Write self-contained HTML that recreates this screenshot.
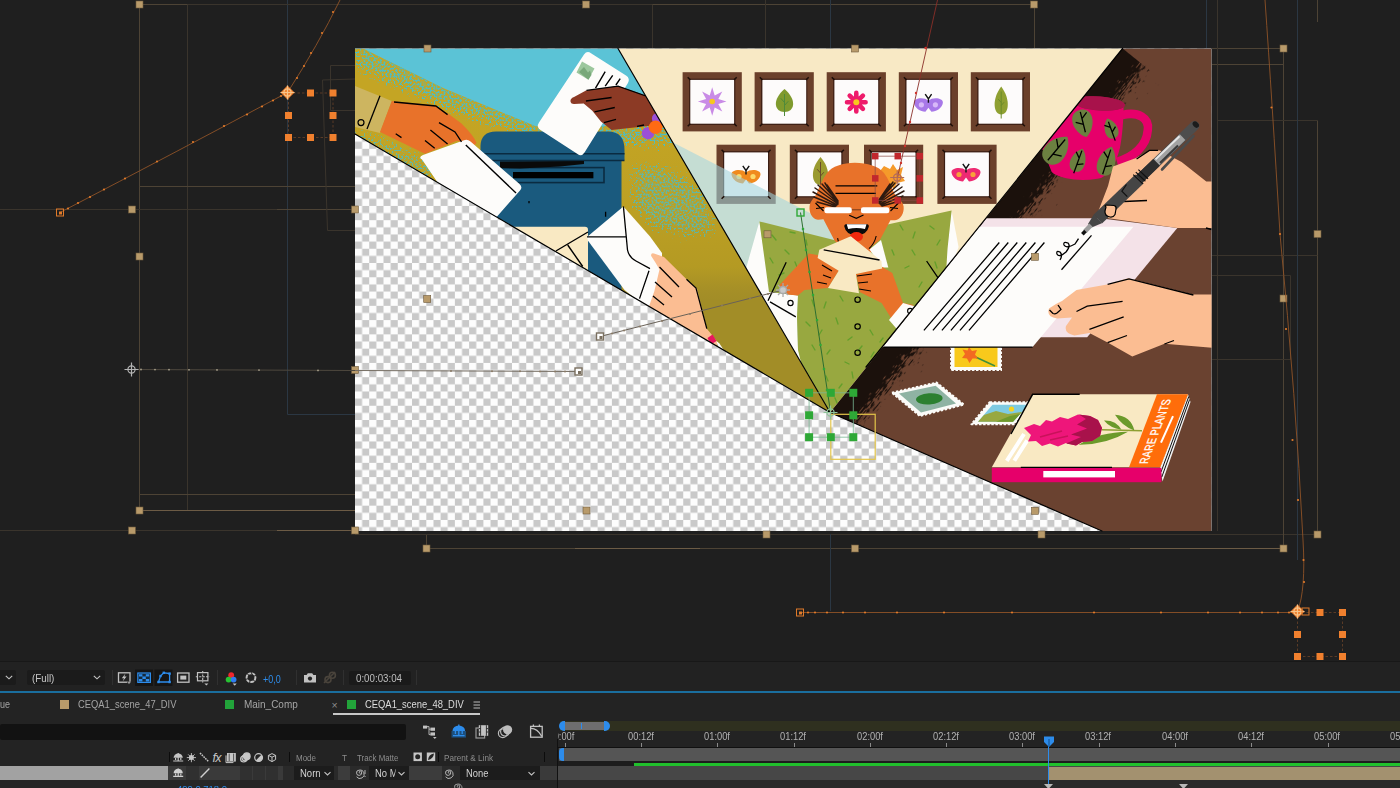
<!DOCTYPE html>
<html lang="en">
<head>
<meta charset="utf-8">
<title>After Effects – CEQA1_scene_48_DIV</title>
<style>
html,body{margin:0;padding:0;}
body{width:1400px;height:788px;overflow:hidden;position:relative;background:#1f1f1f;font-family:"Liberation Sans",sans-serif;color:#b4b4b4;}
#viewer{position:absolute;left:0;top:0;width:1400px;height:662px;display:block;}
#vbar{position:absolute;left:0;top:661px;width:1400px;height:31px;background:#222222;border-top:1px solid #181818;box-sizing:border-box;}
#blueline{position:absolute;left:0;top:691px;width:1400px;height:2px;background:#1a6e9e;}
#tabs{position:absolute;left:0;top:693px;width:1400px;height:24px;background:#232323;}
#tl{position:absolute;left:0;top:717px;width:1400px;height:71px;background:#232323;}
.abs{position:absolute;}
.t{transform-origin:0 50%;position:absolute;white-space:nowrap;font-size:11px;line-height:12px;color:#b0b0b0;}
.sw{position:absolute;width:9px;height:9px;}
.dd{position:absolute;background:#1b1b1b;border-radius:2px;}
</style>
</head>
<body>
<!--VIEWER-->
<svg id="viewer" viewBox="0 0 1400 662" width="1400" height="662">
<defs>
<pattern id="chk" x="354.95" y="48.9" width="14.274" height="14.274" patternUnits="userSpaceOnUse">
<rect width="14.274" height="14.274" fill="#fdfdfd"/><rect x="7.137" width="7.137" height="7.137" fill="#c9c9c9"/><rect y="7.137" width="7.137" height="7.137" fill="#c9c9c9"/>
</pattern>
<clipPath id="comp"><rect x="355" y="48.5" width="856.5" height="482.5"/></clipPath>
</defs>
<rect width="1400" height="662" fill="#1f1f1f"/>
<g id="guides">
<path d="M139.5,4.5 H1034 M139.5,4.5 V510.5 M1034.5,4.5 V48" stroke="#4d4335" stroke-width="1" fill="none" opacity="1"/>
<path d="M280,4.5 H340 M500,4.5 H586" stroke="#6c5b45" stroke-width="1" fill="none" opacity="1"/>
<path d="M187.5,4.5 V510.5" stroke="#3a342c" stroke-width="1" fill="none" opacity="1"/>
<path d="M287.5,0 V414.5 H355" stroke="#2b3743" stroke-width="1" fill="none" opacity="1"/>
<path d="M652.5,4.5 V48 M187.5,4.5 H652 M765.5,0 V48" stroke="#3a342c" stroke-width="1" fill="none" opacity="1"/>
<path d="M0,209.5 H355" stroke="#3a342c" stroke-width="1" fill="none" opacity="1"/>
<path d="M277,209.5 H355" stroke="#4d4335" stroke-width="1" fill="none" opacity="1"/>
<path d="M139.5,186.5 H355" stroke="#4d4335" stroke-width="1" fill="none" opacity="1"/>
<path d="M139.5,494.5 H355" stroke="#4d4335" stroke-width="1" fill="none" opacity="1"/>
<path d="M139.5,510.5 H355" stroke="#6c5b45" stroke-width="1" fill="none" opacity="1"/>
<path d="M0,530.5 H355" stroke="#3a342c" stroke-width="1" fill="none" opacity="1"/>
<path d="M277,530.5 H355" stroke="#6c5b45" stroke-width="1" fill="none" opacity="1"/>
<path d="M426.5,534 V548.5 M426.5,548.5 H1283.5" stroke="#4d4335" stroke-width="1" fill="none" opacity="1"/>
<path d="M575,548.5 H700 M1130,548.5 H1283" stroke="#6c5b45" stroke-width="1" fill="none" opacity="1"/>
<path d="M355,534.5 H1317.5" stroke="#3a342c" stroke-width="1" fill="none" opacity="1"/>
<path d="M1283.5,48.5 V548.5" stroke="#4d4335" stroke-width="1" fill="none" opacity="1"/>
<path d="M1317.5,120.5 V534.5" stroke="#4d4335" stroke-width="1" fill="none" opacity="1"/>
<path d="M1212,48.5 H1283.5 M1212,64.5 H1283.5" stroke="#4d4335" stroke-width="1" fill="none" opacity="1"/>
<path d="M1217.5,0 V531" stroke="#3a342c" stroke-width="1" fill="none" opacity="1"/>
<path d="M1217,120.5 H1317.5 M1212,255.5 H1317.5 M1212,275.5 H1290.5 V359.5 H1212" stroke="#3a342c" stroke-width="1" fill="none" opacity="1"/>
<path d="M830.5,534 V611 M830.5,0 V48" stroke="#2b3743" stroke-width="1" fill="none" opacity="1"/>
<path d="M330.5,65.5 H355 M330.5,65.5 V110.5 H355 M322.5,80 L327.5,230.5 H355 M322.5,80 L355,79" stroke="#3a342c" stroke-width="1" fill="none" opacity="1"/>
<path d="M1297.5,0 V560 M1206.5,0 V48" stroke="#2b3743" stroke-width="1" fill="none"/>
<path d="M1317.5,0 V22" stroke="#4d4335" stroke-width="1" fill="none"/>
</g>
<rect x="355" y="48.5" width="856.5" height="482.5" fill="url(#chk)"/>
<g clip-path="url(#comp)">
<defs>
<clipPath id="p1"><polygon points="355,48.5 618,48.5 830.1,412.5 355,134"/></clipPath>
<clipPath id="p2"><polygon points="618,48.5 1122.6,48.5 830.1,412.5"/></clipPath>
<clipPath id="p3"><polygon points="1122.6,48.5 1211.5,48.5 1211.5,531 1102,531 830.1,412.5"/></clipPath>
<linearGradient id="gold" gradientUnits="userSpaceOnUse" x1="0" y1="115" x2="0" y2="300">
<stop offset="0" stop-color="#c4a524"/><stop offset="0.5" stop-color="#bda023"/><stop offset="0.82" stop-color="#b49a23"/><stop offset="0.95" stop-color="#a58f27"/><stop offset="1" stop-color="#a28d27"/>
</linearGradient>
<filter id="speck" x="-10%" y="-10%" width="120%" height="120%" color-interpolation-filters="sRGB">
<feGaussianBlur in="SourceAlpha" stdDeviation="7" result="b"/>
<feTurbulence type="fractalNoise" baseFrequency="0.5" numOctaves="2" seed="7" result="n"/>
<feColorMatrix in="n" type="matrix" values="0 0 0 0 0  0 0 0 0 0  0 0 0 0 0  1 0 0 0 0" result="m"/>
<feComposite in="b" in2="m" operator="arithmetic" k1="0" k2="0.5" k3="1" k4="-0.96" result="t"/>
<feComponentTransfer in="t" result="t2"><feFuncA type="linear" slope="9" intercept="0"/></feComponentTransfer>
<feFlood flood-color="#4fbcc0"/>
<feComposite in2="t2" operator="in"/>
</filter>
<clipPath id="gclip"><path d="M355,48.5 L363,48.5 L443,88 L535,126 Q560,129.5 590,126.5 L650,124 L700,122.5 L850,130 L850,420 L355,420Z"/></clipPath>
<linearGradient id="bandgrad" gradientUnits="userSpaceOnUse" x1="0" y1="0" x2="0" y2="40">
<stop offset="0" stop-color="#000" stop-opacity="1"/><stop offset="0.3" stop-color="#000" stop-opacity="0.8"/><stop offset="0.62" stop-color="#000" stop-opacity="0.42"/><stop offset="1" stop-color="#000" stop-opacity="0"/>
</linearGradient>
<filter id="charcoal" x="-2%" y="-10%" width="104%" height="130%" color-interpolation-filters="sRGB">
<feTurbulence type="fractalNoise" baseFrequency="0.14 0.8" numOctaves="2" seed="11" result="n"/>
<feColorMatrix in="n" type="matrix" values="0 0 0 0 0  0 0 0 0 0  0 0 0 0 0  1 0 0 0 0" result="m"/>
<feComposite in="SourceAlpha" in2="m" operator="arithmetic" k1="0" k2="1" k3="1" k4="-0.78" result="t"/>
<feComponentTransfer in="t" result="t2"><feFuncA type="linear" slope="7" intercept="0"/></feComponentTransfer>
<feFlood flood-color="#1b110c"/>
<feComposite in2="t2" operator="in"/>
</filter>
<filter id="rough" x="-5%" y="-5%" width="110%" height="110%">
<feTurbulence type="fractalNoise" baseFrequency="0.5" numOctaves="2" seed="3" result="n"/>
<feDisplacementMap in="SourceGraphic" in2="n" scale="7" xChannelSelector="R" yChannelSelector="G"/>
</filter>
</defs>
<!-- PANEL 1 : mailbox -->
<g clip-path="url(#p1)">
<rect x="355" y="48" width="480" height="370" fill="#5bc3d6"/>
<path id="ground" d="M355,48.5 L363,48.5 L443,88 L535,126 Q560,129.5 590,126.5 L650,124 L700,122.5 L850,130 L850,420 L355,420Z" fill="url(#gold)"/>
<g clip-path="url(#gclip)">
<path d="M350,30 L450,78 L540,116 L640,120 L710,120 L706,150 L640,150 L540,146 L440,112 L350,72Z" fill="#000" filter="url(#speck)"/>
<path d="M628,160 L665,160 L712,190 L722,238 L690,242 L650,232 L626,205Z" fill="#000" filter="url(#speck)" opacity="0.8"/>
<path d="M350,124 L380,132 L425,154 L452,170 L450,196 L400,170 L350,140Z" fill="#000" filter="url(#speck)" opacity="0.85"/>
</g>
<!-- mailbox -->
<path d="M480.5,160 L480.5,146 Q481,131.5 496,131.5 L608,131.5 Q624.5,131.5 624.5,150 L624.5,160 L621.5,160 L621.5,300 L440,300 L440,160Z" fill="#1a5a7e"/>
<path d="M480.5,153.7 H624.5 M480.5,160.5 H624.5" stroke="#0a2b41" stroke-width="1.6" fill="none"/>
<rect x="500" y="167.6" width="104" height="15" fill="none" stroke="#0a2b41" stroke-width="1.6"/>
<path d="M500,161.5 L584,161 L584,164 L560,166.5 L520,168.5 L500,168Z" fill="#0a0a0a"/>
<rect x="513" y="172" width="80.4" height="6.3" fill="#000"/>
<path d="M529,201 V203.3 M605.6,211.8 V216.7" stroke="#000" stroke-width="1.3"/>
<!-- cream envelope at bottom -->
<path d="M500,226.8 L585,226.8 Q588,226.8 588,230 L588,272 L520,240Z" fill="#f9e9c3"/>
<path d="M555.9,251 L588,232 M567.7,245 L582.7,266.5" stroke="#000" stroke-width="1.4" fill="none"/>
<!-- white envelope 2 + peach hand -->
<path d="M587,236.9 L623.4,206.4 L650,236.5 L662,253 L662,290 L652,312 L624.5,290 L588,240.7Z" fill="#fdfcfa"/>
<path d="M587,236.9 H625.6 M623.4,206.4 L627.5,250 Q628.8,257 636,261 L650,268.6 M649,270.8 L639.5,298.6" stroke="#000" stroke-width="1.3" fill="none"/>
<path d="M651.2,256 Q650.5,252.6 654,253.4 L664,257 L686.5,279.3 L697,288.5 L706.8,328.7 L712,335 L718,343 L716,346 L649,306.5 L654.4,291 L659.5,269.6 L655.4,262.5Z" fill="#fbbd92"/>
<path d="M716.5,341 L719.5,343.5 L724,350.5 L718,347Z" fill="#fdfcfa"/>
<path d="M707.5,338 L712.5,334.5 L716.5,341 L711,344.5Z" fill="#e8175d"/>
<path d="M659.5,267 L679,287 M686.5,279.3 L696,288 L706.8,328.7 M655,282 L672,297 M653,296 L664,305" stroke="#000" stroke-width="1.3" fill="none"/>
<!-- postcard & brown hand -->
<path d="M591,53.2 L626,75.6 Q630.6,78.6 627.8,83.3 L584.5,152.5 Q581.5,157 577.5,154 L540.5,130 Q536,127 539,122.5 L584,54.5 Q587,50.5 591,53.2Z" fill="#fdfcfa"/>
<path d="M582,61.4 L594.5,68.6 L588.4,79.7 L576.5,72.5Z" fill="#9cc79d"/>
<path d="M579,72 L584,67 L588,72.5 L590,70.5 L591.5,75 L588.4,79.7Z" fill="#6fa070" opacity="0.8"/>
<path d="M605.2,71.7 L595.5,88.2 M612.7,75.4 L605.2,86.1 M620.2,78.6 L615.9,85" stroke="#000" stroke-width="1.4"/>
<path d="M570.5,101.5 Q570,98.5 574,97 L586,90.4 L618,86.1 L665,102 L665,126 L650,125.8 L611.6,130 L600.9,121.5 L592.3,110.8 L583.7,103.6 L574,104Q571,104 570.5,101.5Z" fill="#8c3a25"/>
<path d="M586.5,90.4 L618,86.1 L660,101 M585.9,101 L611.6,97.5 M594.5,111.8 L614.8,107.5 M604,122.6 L616,119.3 M637,126.4 L644,125" stroke="#000" stroke-width="1.3" fill="none"/>
<circle cx="657.5" cy="118.5" r="5.6" fill="#9b4fd6"/><circle cx="648" cy="133.2" r="6.2" fill="#9b4fd6"/><circle cx="655.6" cy="127.2" r="6.8" fill="#ff6a13"/>
<!-- envelope 1 + orange hand -->
<path d="M355,86 L391.8,101 L380,133 L355,127Z" fill="#cdb560"/>
<path d="M380,95.8 L367,129" stroke="#000" stroke-width="1.3"/>
<circle cx="361" cy="122.6" r="3" fill="none" stroke="#000" stroke-width="1.2"/>
<path d="M391.8,101 L435.8,105.4 L448.6,114 L461.5,123.6 Q474,136 476.5,143 Q474,147 468,144 L457,140.8 L425,153.7 L380,132Z" fill="#e8722a"/>
<path d="M422,159.5 Q418,157 423,155 L464,140.2 Q467.5,139 470.5,141.5 L519.5,184 Q523,187 520,190.5 L494,220 L440,186Z" fill="#fdfcfa"/>
<path d="M465.8,145 L516,193" stroke="#000" stroke-width="1.4"/>
<path d="M394,102 L435.8,106 L447.6,114.6 M439,122.6 L455,132 L461.5,141.9 M430.4,130 L447.6,144 M425,140.4 L434.7,148.3 M395.7,133.7 L401.5,137.6" stroke="#000" stroke-width="1.3" fill="none"/>
</g>

<!-- PANEL 2 : man -->
<g clip-path="url(#p2)">
<rect x="610" y="48" width="520" height="370" fill="#f8e9c5"/>
<rect x="682.6" y="72.2" width="59.2" height="59.2" fill="#6b402b"/><rect x="689.1" y="78.7" width="46.2" height="46.2" fill="#3b1d13"/><rect x="690.3" y="79.9" width="43.8" height="43.8" fill="#fdfbfb"/>
<rect x="754.6" y="72.2" width="59.2" height="59.2" fill="#6b402b"/><rect x="761.1" y="78.7" width="46.2" height="46.2" fill="#3b1d13"/><rect x="762.4" y="79.9" width="43.8" height="43.8" fill="#fdfbfb"/>
<rect x="826.7" y="72.2" width="59.2" height="59.2" fill="#6b402b"/><rect x="833.2" y="78.7" width="46.2" height="46.2" fill="#3b1d13"/><rect x="834.4" y="79.9" width="43.8" height="43.8" fill="#fdfbfb"/>
<rect x="898.8" y="72.2" width="59.2" height="59.2" fill="#6b402b"/><rect x="905.2" y="78.7" width="46.2" height="46.2" fill="#3b1d13"/><rect x="906.5" y="79.9" width="43.8" height="43.8" fill="#fdfbfb"/>
<rect x="970.8" y="72.2" width="59.2" height="59.2" fill="#6b402b"/><rect x="977.3" y="78.7" width="46.2" height="46.2" fill="#3b1d13"/><rect x="978.5" y="79.9" width="43.8" height="43.8" fill="#fdfbfb"/>
<rect x="716.5" y="144.7" width="59.2" height="59.2" fill="#6b402b"/><rect x="723.0" y="151.2" width="46.2" height="46.2" fill="#3b1d13"/><rect x="724.2" y="152.4" width="43.8" height="43.8" fill="#fdfbfb"/>
<rect x="789.8" y="144.7" width="59.2" height="59.2" fill="#6b402b"/><rect x="796.3" y="151.2" width="46.2" height="46.2" fill="#3b1d13"/><rect x="797.5" y="152.4" width="43.8" height="43.8" fill="#fdfbfb"/>
<rect x="864.0" y="144.7" width="59.2" height="59.2" fill="#6b402b"/><rect x="870.5" y="151.2" width="46.2" height="46.2" fill="#3b1d13"/><rect x="871.7" y="152.4" width="43.8" height="43.8" fill="#fdfbfb"/>
<rect x="937.4" y="144.7" width="59.2" height="59.2" fill="#6b402b"/><rect x="943.9" y="151.2" width="46.2" height="46.2" fill="#3b1d13"/><rect x="945.1" y="152.4" width="43.8" height="43.8" fill="#fdfbfb"/>
<polygon points="712.2,87.2 714.7,95.4 722.3,91.4 718.3,99.0 726.5,101.5 718.3,104.0 722.3,111.6 714.7,107.6 712.2,115.8 709.7,107.6 702.1,111.6 706.1,104.0 697.9,101.5 706.1,99.0 702.1,91.4 709.7,95.4" fill="#c98be6"/><circle cx="712.2" cy="101.5" r="2.8" fill="#f7c81e"/>
<path d="M784.5,89.0 C797.25,99.8 794.7,112.0 784.5,112.0 C774.3,112.0 771.75,99.8 784.5,89.0Z" fill="#7f9a2e"/><path d="M784.5,94.0 V116.0 M784.5,102.5 l-3.74,-4.25 M784.5,105.5 l3.74,-4.25" stroke="#4f8a3a" stroke-width="1" fill="none"/>
<path d="M1001.2,86.5 C1010.95,99.3 1009.0,114.5 1001.2,114.5 C993.4000000000001,114.5 991.45,99.3 1001.2,86.5Z" fill="#8fa032"/><path d="M1001.2,91.5 V118.5 M1001.2,102.5 l-2.86,-3.25 M1001.2,105.5 l2.86,-3.25" stroke="#6b8a2a" stroke-width="1" fill="none"/>
<path d="M820.5,157.0 C831.75,169.8 829.5,185.0 820.5,185.0 C811.5,185.0 809.25,169.8 820.5,157.0Z" fill="#9a9a30"/><path d="M820.5,162.0 V189.0 M820.5,173 l-3.3,-3.75 M820.5,176 l3.3,-3.75" stroke="#6b4a2a" stroke-width="1" fill="none"/>
<path d="M856.3,102.2 L865.6,102.2 M856.3,102.2 L862.9,108.8 M856.3,102.2 L856.3,111.5 M856.3,102.2 L849.7,108.8 M856.3,102.2 L847.0,102.2 M856.3,102.2 L849.7,95.6 M856.3,102.2 L856.3,92.9 M856.3,102.2 L862.9,95.6 " stroke="#ee1b6b" stroke-width="4.6" stroke-linecap="round" fill="none"/><circle cx="856.3" cy="102.2" r="3" fill="#f7c81e"/>
<path d="M928.4,100.8 C932.4,96.8 943.4,97.8 942.9,102.8 C942.4,107.8 936.4,111.8 931.4,111.8 L928.4,107.8 L925.4,111.8 C920.4,111.8 914.4,107.8 913.9,102.8 C913.4,97.8 924.4,96.8 928.4,100.8Z" fill="#a878e8"/><circle cx="921.4" cy="104.8" r="2.6" fill="#d8b8f8"/><circle cx="935.4" cy="104.8" r="2.6" fill="#d8b8f8"/><path d="M928.4,102.8 V98.8 l-3.2,-4.6 M928.4,98.8 l3.2,-4.6" stroke="#111" stroke-width="1.4" fill="none"/>
<path d="M746,172.5 C750,168.5 761,169.5 760.5,174.5 C760,179.5 754,183.5 749,183.5 L746,179.5 L743,183.5 C738,183.5 732,179.5 731.5,174.5 C731,169.5 742,168.5 746,172.5Z" fill="#f08a1e"/><circle cx="739" cy="176.5" r="2.6" fill="#fbd86a"/><circle cx="753" cy="176.5" r="2.6" fill="#fbd86a"/><path d="M746.0,174.5 V170.5 l-3.2,-4.6 M746.0,170.5 l3.2,-4.6" stroke="#111" stroke-width="1.4" fill="none"/>
<path d="M966,170.5 C970,166.5 981,167.5 980.5,172.5 C980,177.5 974,181.5 969,181.5 L966,177.5 L963,181.5 C958,181.5 952,177.5 951.5,172.5 C951,167.5 962,166.5 966,170.5Z" fill="#ee2a72"/><circle cx="959" cy="174.5" r="2.6" fill="#f8a03a"/><circle cx="973" cy="174.5" r="2.6" fill="#f8a03a"/><path d="M966.0,172.5 V168.5 l-3.2,-4.6 M966.0,168.5 l3.2,-4.6" stroke="#111" stroke-width="1.4" fill="none"/>
<path d="M884,166 l6,3 l3,-5 l4,6 l6,-3 l-2,8 l4,6 l-8,2 l-3,6 l-5,-5 l-8,1 l4,-7 l-5,-7z" fill="#f59a2a"/>
<polygon points="671,139.5 672.6,142.2 850,233.7 800,350 760,300" fill="rgb(160,212,221)" fill-opacity="0.58"/>
</g>
<g clip-path="url(#p2)"><path d="M690.3,79.9 l-2.6,-2.6 M734.1,79.9 l2.6,-2.6 M690.3,123.7 l-2.6,2.6 M734.1,123.7 l2.6,2.6 M762.4,79.9 l-2.6,-2.6 M806.1,79.9 l2.6,-2.6 M762.4,123.7 l-2.6,2.6 M806.1,123.7 l2.6,2.6 M834.4,79.9 l-2.6,-2.6 M878.2,79.9 l2.6,-2.6 M834.4,123.7 l-2.6,2.6 M878.2,123.7 l2.6,2.6 M906.5,79.9 l-2.6,-2.6 M950.2,79.9 l2.6,-2.6 M906.5,123.7 l-2.6,2.6 M950.2,123.7 l2.6,2.6 M978.5,79.9 l-2.6,-2.6 M1022.3,79.9 l2.6,-2.6 M978.5,123.7 l-2.6,2.6 M1022.3,123.7 l2.6,2.6 M724.2,152.4 l-2.6,-2.6 M768.0,152.4 l2.6,-2.6 M724.2,196.2 l-2.6,2.6 M768.0,196.2 l2.6,2.6 M797.5,152.4 l-2.6,-2.6 M841.3,152.4 l2.6,-2.6 M797.5,196.2 l-2.6,2.6 M841.3,196.2 l2.6,2.6 M871.7,152.4 l-2.6,-2.6 M915.5,152.4 l2.6,-2.6 M871.7,196.2 l-2.6,2.6 M915.5,196.2 l2.6,2.6 M945.1,152.4 l-2.6,-2.6 M988.9,152.4 l2.6,-2.6 M945.1,196.2 l-2.6,2.6 M988.9,196.2 l2.6,2.6 " stroke="#1e0e08" stroke-width="1.5" fill="none"/></g>
<!-- MAN -->
<g clip-path="url(#p2)">
<!-- white lapel/shirt left -->
<polygon points="759.4,221.4 745,272 815,395 812,380 798,350 797,317 798,295.4 770,290" fill="#fdfcfa"/>
<!-- green coat -->
<polygon points="951.6,210.5 958.6,247 953,262 946.3,268 947,250" fill="#fdfcfa"/>
<polygon points="759.4,221.4 838,241 878,240 876,227 951.6,210.5 947.6,248 946.3,268 962,268 962,420 815,420 798,350 797,317 798,295.4 769,292" fill="#98a840"/>
<g stroke="#639f2b" stroke-width="1.35" fill="none" stroke-linecap="round">
<path d="M772,235 l4,5 M790,232 l5,1 M806,240 l1,5 M785,250 l4,4 M770,258 l3,5 M779,275 l5,-2 M795,262 l2,5 M812,300 l2,6 M826,302 l-2,6 M840,296 l3,5 M806,322 l4,4 M822,330 l-3,5 M836,318 l2,6 M848,340 l4,-3 M870,330 l3,5 M812,345 l3,5 M830,350 l-3,4 M845,362 l4,2 M862,346 l-4,5 M874,352 l-3,5 M826,376 l2,5 M842,384 l-3,4 M852,372 l1,6 M835,398 l2,5 M880,342 l3,-4 M900,225 l3,5 M915,232 l-2,6 M930,226 l4,3 M912,250 l3,5 M905,268 l4,-2 M922,282 l-3,5 M935,262 l2,6 M928,300 l4,-3 M940,240 l-3,5 M892,250 l2,5"/>
</g>
<path d="M786.2,262.2 L768,300.8 M926.6,261 L938.4,278.3" stroke="#000" stroke-width="1.3"/>
<path d="M770,301.9 L795.8,316.9" stroke="#000" stroke-width="1.3"/>
<circle cx="790.5" cy="303" r="2.6" fill="none" stroke="#000" stroke-width="1.2"/>
<g fill="none" stroke="#000" stroke-width="1.2"><circle cx="857.6" cy="299.7" r="2.7"/><circle cx="857.6" cy="326.5" r="2.7"/><circle cx="857.6" cy="352.7" r="2.7"/></g>
<!-- neck + head -->
<rect x="843" y="232" width="28" height="26" fill="#e8722a"/>
<path d="M854.9,162.8 C843,162.8 832,166.5 827,173 C822.5,179 819.5,187 816.8,193.3 C814.5,198.5 810.5,200 809.6,206 C808.8,212.5 812,219 818,219.8 L823.4,219.3 L834.5,240.6 L845,252 L869,248.7 L880.2,239.6 L890.4,220.3 L895,220.3 C901,219.5 904.3,213 903.6,206.5 C902.8,200.5 897,198.5 894.2,193.3 C891.5,187 888.5,179 884,173 C879,166.5 867,162.8 854.9,162.8Z" fill="#e8722a"/>
<polygon points="881,240 869.5,249.5 882,267.6 888.3,267.6" fill="#fdfcfa"/>
<path d="M835.5,185.8 H877.3 M835.5,193.3 H876" stroke="#000" stroke-width="1.2"/>
<g stroke="#2e1a10" stroke-width="1.5" fill="none" stroke-linecap="round">
<path d="M838,204 L815,188 M838,203 L818,185 M838,202 L822,184 M837,205 L813,192 M836,206 L814,197 M838,201 L827,185 M835,207 L817,202 M837,203 L825,183"/>
<path d="M879,203 L902,187 M879,202 L899,184 M879,201 L895,183 M880,204 L904,191 M881,205 L903,196 M879,200 L890,184 M882,206 L900,201 M879,202 L893,182"/>
</g>
<rect x="824.4" y="207.3" width="27.4" height="5.9" rx="2.2" fill="#fff"/><rect x="860.9" y="207.3" width="28.4" height="5.9" rx="2.2" fill="#fff"/>
<path d="M851.8,209.8 H860.9" stroke="#5a2a14" stroke-width="0.8"/>
<path d="M815.5,203 l8,8 M816,208.5 l8,-1 M898.5,203 l-8,8 M898,208.5 l-8,-1 M849.2,215.2 L856.3,218.3 L863.5,215 M837.6,238.2 l0.8,3.4 M876.2,236 Q874.5,243.5 869,248.7" stroke="#000" stroke-width="1.1" fill="none"/>
<path d="M844.3,226.5 Q844,223.8 847.5,224 L865.5,224 Q869.2,223.8 868.8,226.8 Q867,235.2 856.5,235.2 Q846,235.2 844.3,226.5Z" fill="#0a0a0a"/>
<path d="M846.7,224.2 H866.5 L865,229 Q856.5,226.8 848.2,229Z" fill="#fff"/>
<ellipse cx="856.4" cy="236.8" rx="6.6" ry="4.8" fill="#f0280e"/>
<!-- hands + envelope -->
<polygon points="778.7,285.8 808.7,253.6 821.6,255.8 838.7,270.8 828,287.9 804.4,290 798,295.4 787.2,294.4" fill="#e8722a"/>
<polygon points="855.9,274 881.6,266.5 892.3,272.9 903,302.9 913.8,305 892.3,320 881.6,303 860.2,292.2" fill="#e8722a"/>
<polygon points="903,303 918,307.2 896.6,328.7 889,320" fill="#fdfcfa"/>
<circle cx="910.1" cy="310.9" r="2.5" fill="none" stroke="#000" stroke-width="1.1"/>
<polygon points="850.8,236.3 881.4,261 882.2,268.6 855.9,274 859,293.3 828,287.9 838.7,270.8 817.6,258 819.3,249.7" fill="#f9e9c3"/>
<path d="M823.7,249.8 L879.5,260" stroke="#000" stroke-width="1.3"/>
<path d="M822,265 l10,6 M823,275 l8,3 M817,282 l10,2 M857,276 l15,-2 M858,283 l10,-1 M859,289 l12,2" stroke="#000" stroke-width="1.2"/>
</g>

<!-- PANEL 3 : desk -->
<g clip-path="url(#p3)">
<rect x="820" y="48" width="400" height="490" fill="#6a4230"/>
<g transform="translate(830.1,412.5) rotate(-51.2)">
<polygon points="0,0 467,0 467,42 300,40 90,38 10,36 -6,10" fill="url(#bandgrad)" filter="url(#charcoal)"/>
</g>
<!-- stamps -->
<g>
<polygon points="891.9,392.7 936.6,382.6 964,404.6 919.8,416" fill="#fbfbf8" stroke="#fbfbf8" stroke-width="2" stroke-dasharray="2.5 1.6" stroke-linejoin="round"/>
<polygon points="899,393.6 935.6,385.8 956,403.6 921,412.4" fill="#8fb3a3"/>
<ellipse cx="929.3" cy="398.9" rx="13.3" ry="5.6" fill="#2c8030" transform="rotate(-4 929.3 398.9)"/>
<rect x="951" y="340" width="50" height="30" fill="#fbfbf8" stroke="#fbfbf8" stroke-width="2" stroke-dasharray="2.5 1.6"/>
<rect x="954.5" y="343" width="43" height="24" fill="#f8c91c"/>
<path d="M969,354 L995,366" stroke="#3f8f3a" stroke-width="1.5"/>
<path d="M969,347 l3,4 l5,-1 l-2,4.5 l3,4 l-5.5,0 l-3,4.5 l-2.5,-4.5 l-5,-0.5 l3,-4 l-2.5,-4.5 l5,1z" fill="#f26a21"/>
<polygon points="989.7,402.2 1034,402.2 1014,424.3 971.4,424.3" fill="#fbfbf8" stroke="#fbfbf8" stroke-width="2" stroke-dasharray="2.5 1.6" stroke-linejoin="round"/>
<polygon points="992.5,404.7 1029,404.7 1013,421.8 978,421.8" fill="#7fcbe2"/>
<polygon points="984,415 996,411 1008,414 1022,412 1013,421.8 978,421.8" fill="#98a840"/>
<polygon points="996,421.8 1010,416 1020,414 1013,421.8" fill="#6f9a2c"/>
<circle cx="1011.5" cy="409" r="2.6" fill="#f7d21e"/>
</g>
<!-- mug -->
<path d="M1122,115.2 C1138,111 1149.5,118 1147.8,130 C1146.5,146 1134,157 1117,161.8" fill="none" stroke="#e6006a" stroke-width="8.6"/>
<path d="M1060,98 L1123.5,104 C1123.8,120 1122,138 1119.9,148 Q1117,160 1112,168 Q1106,177.5 1097.5,178.8 Q1080,181.5 1066.2,178.2 Q1056,176 1051.7,172 L1043.2,150.5 L1030,132Z" fill="#e6006a"/>
<ellipse cx="1099.4" cy="103.5" rx="25.6" ry="7" fill="#a8124b" transform="rotate(4 1099.4 103.5)"/>
<g transform="translate(1083.2,123.5) rotate(166)"><path d="M0,-14.0 C12.65,-6.3 14.26,14.0 0,14.0 C-14.26,14.0 -12.65,-6.3 0,-14.0Z" fill="#6b8040"/><path d="M0,12 L0,-9 M0,5 l-6,5 M0,-1 l7,4" stroke="#000" stroke-width="1.3" fill="none"/></g>
<ellipse cx="1099.4" cy="103.5" rx="25.6" ry="7" fill="#a8124b" transform="rotate(4 1099.4 103.5)"/>
<g transform="translate(1110.8,128.4) rotate(-20)"><path d="M0,-10.5 C8.25,-4.7250000000000005 9.3,10.5 0,10.5 C-9.3,10.5 -8.25,-4.7250000000000005 0,-10.5Z" fill="#6b8040"/><path d="M0,-7 L0,13 M0,-1 l-5,-4 M0,4 l5,-4" stroke="#000" stroke-width="1.3" fill="none"/></g>
<g transform="translate(1056.8,149.5) rotate(40)"><path d="M0,-16.5 C13.750000000000002,-7.425 15.5,16.5 0,16.5 C-15.5,16.5 -13.750000000000002,-7.425 0,-16.5Z" fill="#6b8040"/><path d="M0,-13 L0,14 M0,-2 l-7,-6 M0,6 l8,-4" stroke="#000" stroke-width="1.3" fill="none"/></g>
<g transform="translate(1078.5,160) rotate(20)"><path d="M0,-12.0 C9.350000000000001,-5.4 10.54,12.0 0,12.0 C-10.54,12.0 -9.350000000000001,-5.4 0,-12.0Z" fill="#6b8040"/><path d="M0,-10 L0,14 M0,-2 l-5,-5 M0,5 l6,-3" stroke="#000" stroke-width="1.3" fill="none"/></g>
<g transform="translate(1107,161) rotate(18)"><path d="M0,-15.0 C11.0,-6.75 12.4,15.0 0,15.0 C-12.4,15.0 -11.0,-6.75 0,-15.0Z" fill="#6b8040"/><path d="M0,-12 L0,14 M0,-3 l-6,-5 M0,6 l6,-3" stroke="#000" stroke-width="1.3" fill="none"/></g>
</g>

</g>

<g clip-path="url(#p3)">
<!-- paper -->
<polygon points="986.2,218.2 1100,218.2 1177.3,227.9 1087.2,337.2 1040,337.2 900,337" fill="#f4e2e8"/>
<polygon points="979.3,226.8 1133.4,226.8 1032.6,346.9 882.8,346.9" fill="#fdfcfa"/>
<path d="M884,347.2 H1032.6" stroke="#000" stroke-width="1.3"/>
<g stroke="#000" stroke-width="1.3">
<path d="M999.3,242.5 L923.9,330.4 M1008.3,242.5 L932.9,330.4 M1017.3,242.5 L941.9,330.4 M1026.3,242.5 L950.9,330.4 M1035.4,242.5 L960,330.4 M1044.4,242.5 L969,330.4"/>
<path d="M1061.5,269.7 L1091.5,235.4"/>
</g>
<path d="M1078.5,238.6 Q1077,241 1075,244 Q1066,249 1064,245 Q1063,241 1068,243 Q1071,246 1066,252 Q1059,258 1057,254 Q1056,250 1060,252 Q1063,255 1060,260" fill="none" stroke="#000" stroke-width="1.3"/>
<!-- upper hand with pen -->
<path d="M1098,212 L1108,186 L1113,166.5 L1136,158 L1149.4,150.5 L1160,150.5 L1181.6,162 L1206.3,181.5 L1215,181.5 L1215,227.9 L1177.3,227.9 L1108.7,218.2Z" fill="#fbbd92"/>
<path d="M1136.6,159 L1149.4,150.4 L1158,150.4 M1124,201.5 L1147,200.5 M1206,228 L1211.5,229.5" stroke="#000" stroke-width="1.3" fill="none"/>
<!-- pen -->
<g>
<path d="M1193.5,136 L1162,169.5" stroke="#4b4b4b" stroke-width="2.6" stroke-linecap="round"/>
<path d="M1194.6,125.8 L1140,178.4" stroke="#4d4d4d" stroke-width="9.6" stroke-linecap="round"/>
<ellipse cx="1195.8" cy="124.6" rx="3.6" ry="2.6" transform="rotate(44 1195.8 124.6)" fill="#1c1c1c"/>
<path d="M1182.6,137.2 L1156.5,162.4" stroke="#a2a2a2" stroke-width="8"/>
<path d="M1179.5,136.2 L1155.5,159.4" stroke="#e6e6e6" stroke-width="2"/>
<path d="M1178,145.5 L1160,163" stroke="#3a3a3a" stroke-width="2.2"/>
<path d="M1156.5,162.4 L1138,180.3" stroke="#2e2e2e" stroke-width="9.6"/>
<path d="M1139.5,178.9 L1098,218.8" stroke="#454545" stroke-width="12.2"/>
<path d="M1102.4,223 L1093.8,214.4 L1088,224 L1091.6,227.6Z" fill="#454545"/>
<path d="M1091,225.2 L1085,231.4" stroke="#9c9c9c" stroke-width="4.6"/>
<path d="M1085.4,231 L1082.4,234.2" stroke="#111" stroke-width="3.6"/>
<path d="M1133.2,174.6 l9.6,9.2 M1135.8,172.1 l9.6,9.2 M1138.4,169.6 l9.6,9.2" stroke="#111" stroke-width="1.2"/>
<path d="M1126.5,184.5 l-4.6,6.6 l5.4,5.6" stroke="#111" stroke-width="1.2" fill="none"/>
</g>
<path d="M1106,207 Q1104,205 1106.5,205 L1114,205.5 Q1116.5,206 1116,209 L1115,214.5 Q1113.5,217.5 1110,217 Q1104.5,216 1105,211Z" fill="#fbbd92" stroke="#000" stroke-width="1.2"/>
<!-- lower hand -->
<path d="M1049,308.5 Q1055,304 1062,301 L1076.5,290 L1107,284.5 L1128,278.3 L1193.4,294.4 L1215,294.4 L1215,348 L1164.5,343.7 L1132.3,356.5 L1107.6,342.6 L1089.4,333 L1074.4,335.5 Q1064,333 1066,326 L1072,317.5 L1057,318.5 Q1046,317 1049,308.5Z" fill="#fbbd92"/>
<g stroke="#000" stroke-width="1.3" fill="none">
<path d="M1107.6,284.3 L1129,278.9 L1193.4,295 M1076.5,311.5 L1087.2,306.2 L1122.6,301.4 M1089.4,329.3 L1123.7,316.9 M1107.6,342.6 L1127,335.5 M1164.5,344 L1174,340.5"/>
<path d="M1049.5,310 L1053,313.5 Q1055,314.5 1057,313 L1061,309.5 L1058,305"/>
</g>
<!-- book -->
<polygon points="1188,394.3 1190.5,402 1162.5,481.5 1160.2,467.2" fill="#f2f2f2"/>
<path d="M1188.8,396.5 L1161,472 M1189.6,399.5 L1161.8,477" stroke="#111" stroke-width="1"/>
<polygon points="1032.6,394.3 1188,394.3 1160.2,467.2 991.8,467.2" fill="#f9e9c3"/>
<polygon points="1157,394.3 1188,394.3 1160.2,467.2 1129,467.2" fill="#ff6d0a"/>
<rect x="991.8" y="467.8" width="169.6" height="14.4" fill="#e6006a"/>
<rect x="1043.3" y="471" width="71.7" height="6.4" fill="#fff"/>
<path d="M1079.7,394.3 L1032.6,394.3 L1011,434 M1020.8,467.4 L1112,467.4" stroke="#000" stroke-width="1.4" fill="none"/>
<path d="M1006.8,460.8 L1024,434 M1014.3,460.8 L1027.2,440.4" stroke="#fff" stroke-width="4"/>
<path d="M1161,442.6 L1173,416.2" stroke="#fff" stroke-width="2"/>
<text transform="matrix(0.345,-0.938,0.97,0,1147.5,464)" font-family="'Liberation Sans',sans-serif" font-size="12.6" fill="#fff" stroke="#fff" stroke-width="0.3" textLength="69" lengthAdjust="spacingAndGlyphs">RARE PLANTS</text>
<!-- flower -->
<path d="M1102,429.7 L1142,430.8" stroke="#8fa032" stroke-width="1.4"/>
<path d="M1115,414.7 Q1131,416 1134.4,430.5 Q1122,426 1115,414.7Z M1104,420.5 Q1116,420 1121.5,429.8 Q1110,428 1104,420.5Z M1078.7,444.7 Q1100,432 1128,431.8 Q1106,445 1078.7,444.7Z" fill="#6b9a2a"/>
<path d="M1024,428 L1034,424 L1040,426 L1046,420 L1052,421.5 L1060,417 L1068,419 L1078,414.5 L1090,416 L1098,420 L1102,428 L1100,436 L1092,441 L1082,442 L1076,445.5 L1066,443 L1058,446.5 L1050,443.5 L1042,446 L1036,441 L1028,441.5 L1031,435Z" fill="#ee167a"/>
<path d="M1079,414.5 L1090,416 L1098,420 L1102,428 L1100,436 L1092,441 L1082,442 L1076,445.5 L1066,443.5 L1081,437 L1071,434.5 L1087,428.5 L1077,424.5 L1086,419Z" fill="#a8124b"/><path d="M1040,437 L1062,431 M1050,440 L1068,436" stroke="#c8125a" stroke-width="1.4"/>
</g>
<!-- panel edges -->
<g stroke="#000" stroke-width="1.2" fill="none" stroke-linecap="round">
<path d="M618,48.5 L830.1,412.5 M355,134 L830.1,412.5 L1102,531 M1122.6,48.5 L866,367"/>
</g>

<!--ART5-->
</g>
<g id="overlays">
<g stroke="#6e5a3c" stroke-width="0.6">
<rect x="136.0" y="1.0" width="7" height="7" fill="#b89a6a"/>
<rect x="582.5" y="1.0" width="7" height="7" fill="#b89a6a"/>
<rect x="1030.5" y="1.0" width="7" height="7" fill="#b89a6a"/>
<rect x="424.0" y="45.0" width="7" height="7" fill="#b89a6a"/>
<rect x="851.5" y="45.0" width="7" height="7" fill="#b89a6a"/>
<rect x="1280.0" y="45.0" width="7" height="7" fill="#b89a6a"/>
<rect x="128.5" y="206.0" width="7" height="7" fill="#b89a6a"/>
<rect x="351.5" y="206.0" width="7" height="7" fill="#b89a6a"/>
<rect x="136.0" y="253.0" width="7" height="7" fill="#b89a6a"/>
<rect x="423.7" y="295.5" width="7" height="7" fill="#b89a6a"/>
<rect x="351.5" y="366.5" width="7" height="7" fill="#b89a6a"/>
<rect x="136.0" y="507.0" width="7" height="7" fill="#b89a6a"/>
<rect x="128.5" y="527.0" width="7" height="7" fill="#b89a6a"/>
<rect x="351.5" y="527.0" width="7" height="7" fill="#b89a6a"/>
<rect x="583.0" y="507.0" width="7" height="7" fill="#b89a6a"/>
<rect x="423.0" y="545.0" width="7" height="7" fill="#b89a6a"/>
<rect x="851.5" y="545.0" width="7" height="7" fill="#b89a6a"/>
<rect x="1280.0" y="545.0" width="7" height="7" fill="#b89a6a"/>
<rect x="763.0" y="531.0" width="7" height="7" fill="#b89a6a"/>
<rect x="1038.0" y="531.0" width="7" height="7" fill="#b89a6a"/>
<rect x="1314.0" y="531.0" width="7" height="7" fill="#b89a6a"/>
<rect x="1314.0" y="230.5" width="7" height="7" fill="#b89a6a"/>
<rect x="1280.0" y="295.0" width="7" height="7" fill="#b89a6a"/>
<rect x="1031.5" y="253.3" width="7" height="7" fill="#b89a6a"/>
<rect x="1031.5" y="507.3" width="7" height="7" fill="#b89a6a"/>
<rect x="764.0" y="230.8" width="7" height="7" fill="#b89a6a"/>
</g>
<path d="M60,212.5 Q180,150 287.5,92.5 Q318,45 340,0" stroke="#8f5227" stroke-width="0.9" fill="none"/>
<circle cx="68.0" cy="208.5" r="1.1" fill="#e07a2a"/>
<circle cx="78.0" cy="203.0" r="1.1" fill="#e07a2a"/>
<circle cx="90.0" cy="197.0" r="1.1" fill="#e07a2a"/>
<circle cx="104.0" cy="189.5" r="1.1" fill="#e07a2a"/>
<circle cx="125.0" cy="178.5" r="1.1" fill="#e07a2a"/>
<circle cx="157.0" cy="161.5" r="1.1" fill="#e07a2a"/>
<circle cx="193.0" cy="142.0" r="1.1" fill="#e07a2a"/>
<circle cx="224.0" cy="126.0" r="1.1" fill="#e07a2a"/>
<circle cx="247.0" cy="114.5" r="1.1" fill="#e07a2a"/>
<circle cx="262.0" cy="106.5" r="1.1" fill="#e07a2a"/>
<circle cx="273.0" cy="100.5" r="1.1" fill="#e07a2a"/>
<circle cx="281.0" cy="96.0" r="1.1" fill="#e07a2a"/>
<circle cx="297.0" cy="78.0" r="1.1" fill="#e07a2a"/>
<circle cx="304.0" cy="66.0" r="1.1" fill="#e07a2a"/>
<circle cx="311.0" cy="53.0" r="1.1" fill="#e07a2a"/>
<circle cx="322.0" cy="33.0" r="1.1" fill="#e07a2a"/>
<circle cx="333.0" cy="12.0" r="1.1" fill="#e07a2a"/>
<rect x="56.5" y="209" width="7" height="7" fill="none" stroke="#e07a2a" stroke-width="1"/><rect x="59" y="211.5" width="3" height="3" fill="#e07a2a"/>
<path d="M288.5,93 H333 V137.5 H288.5Z" stroke="#6a4228" stroke-width="0.8" fill="none" stroke-dasharray="2.5 2"/>
<rect x="285.0" y="112.0" width="7" height="7" fill="#f0802e"/>
<rect x="285.0" y="134.0" width="7" height="7" fill="#f0802e"/>
<rect x="307.0" y="89.5" width="7" height="7" fill="#f0802e"/>
<rect x="307.0" y="134.0" width="7" height="7" fill="#f0802e"/>
<rect x="329.5" y="89.5" width="7" height="7" fill="#f0802e"/>
<rect x="329.5" y="112.0" width="7" height="7" fill="#f0802e"/>
<rect x="329.5" y="134.0" width="7" height="7" fill="#f0802e"/>
<polygon points="287.5,85.5 294.5,92.5 287.5,99.5 280.5,92.5" fill="#f0802e"/>
<g stroke="#f6c48a" fill="none" stroke-width="1.2"><circle cx="287.5" cy="92.5" r="3.6"/><path d="M280.5,92.5 H294.5 M287.5,85.5 V99.5"/></g>
<path d="M800,612.5 H1297.5 M1297.5,611.5 Q1306,590 1303,540 Q1296,400 1280,234 Q1272,100 1265,0" stroke="#8f5227" stroke-width="0.9" fill="none"/>
<circle cx="808.0" cy="612.5" r="1.1" fill="#e07a2a"/>
<circle cx="815.0" cy="612.5" r="1.1" fill="#e07a2a"/>
<circle cx="827.0" cy="612.5" r="1.1" fill="#e07a2a"/>
<circle cx="843.0" cy="612.5" r="1.1" fill="#e07a2a"/>
<circle cx="865.0" cy="612.5" r="1.1" fill="#e07a2a"/>
<circle cx="897.0" cy="612.5" r="1.1" fill="#e07a2a"/>
<circle cx="944.0" cy="612.5" r="1.1" fill="#e07a2a"/>
<circle cx="1012.0" cy="612.5" r="1.1" fill="#e07a2a"/>
<circle cx="1094.0" cy="612.5" r="1.1" fill="#e07a2a"/>
<circle cx="1161.0" cy="612.5" r="1.1" fill="#e07a2a"/>
<circle cx="1208.0" cy="612.5" r="1.1" fill="#e07a2a"/>
<circle cx="1240.0" cy="612.5" r="1.1" fill="#e07a2a"/>
<circle cx="1262.0" cy="612.5" r="1.1" fill="#e07a2a"/>
<circle cx="1278.0" cy="612.5" r="1.1" fill="#e07a2a"/>
<circle cx="1289.0" cy="612.5" r="1.1" fill="#e07a2a"/>
<circle cx="1304.0" cy="582.0" r="1.1" fill="#e07a2a"/>
<circle cx="1303.5" cy="560.0" r="1.1" fill="#e07a2a"/>
<circle cx="1298.0" cy="500.0" r="1.1" fill="#e07a2a"/>
<circle cx="1292.5" cy="440.0" r="1.1" fill="#e07a2a"/>
<circle cx="1286.0" cy="329.0" r="1.1" fill="#e07a2a"/>
<circle cx="1280.0" cy="234.0" r="1.1" fill="#e07a2a"/>
<circle cx="1271.5" cy="107.5" r="1.1" fill="#e07a2a"/>
<rect x="796.5" y="609" width="7" height="7" fill="none" stroke="#e07a2a" stroke-width="1"/><rect x="799" y="611.5" width="3" height="3" fill="#e07a2a"/>
<path d="M1297.5,612.5 H1342.5 V656.5 H1297.5Z" stroke="#6a4228" stroke-width="0.8" fill="none" stroke-dasharray="2.5 2"/>
<rect x="1294.0" y="631.0" width="7" height="7" fill="#f0802e"/>
<rect x="1294.0" y="653.0" width="7" height="7" fill="#f0802e"/>
<rect x="1316.5" y="609.0" width="7" height="7" fill="#f0802e"/>
<rect x="1316.5" y="653.0" width="7" height="7" fill="#f0802e"/>
<rect x="1339.0" y="609.0" width="7" height="7" fill="#f0802e"/>
<rect x="1339.0" y="631.0" width="7" height="7" fill="#f0802e"/>
<rect x="1339.0" y="653.0" width="7" height="7" fill="#f0802e"/>
<polygon points="1297.5,604.5 1304.5,611.5 1297.5,618.5 1290.5,611.5" fill="#f0802e"/>
<g stroke="#f6c48a" fill="none" stroke-width="1.2"><circle cx="1297.5" cy="611.5" r="3.6"/><path d="M1290.5,611.5 H1304.5 M1297.5,604.5 V618.5"/></g>
<rect x="1302" y="608" width="7" height="7" fill="none" stroke="#e07a2a" stroke-width="1"/>
<path d="M937.5,0 L897.5,177.5" stroke="#8a2f28" stroke-width="0.9" fill="none"/>
<circle cx="925.6" cy="48.0" r="1.2" fill="#d0342c"/>
<circle cx="916.0" cy="93.0" r="1.2" fill="#d0342c"/>
<circle cx="910.0" cy="122.0" r="1.2" fill="#d0342c"/>
<circle cx="905.0" cy="146.0" r="1.2" fill="#d0342c"/>
<circle cx="901.0" cy="163.0" r="1.2" fill="#d0342c"/>
<path d="M875.2,156.2 H919.8 V200.4 H875.2Z" stroke="#8a4a44" stroke-width="0.7" fill="none"/>
<rect x="872.0" y="152.9" width="6.5" height="6.5" fill="#c1272d"/>
<rect x="872.0" y="175.1" width="6.5" height="6.5" fill="#c1272d"/>
<rect x="872.0" y="197.2" width="6.5" height="6.5" fill="#c1272d"/>
<rect x="894.5" y="152.9" width="6.5" height="6.5" fill="#c1272d"/>
<rect x="894.5" y="197.2" width="6.5" height="6.5" fill="#c1272d"/>
<rect x="916.5" y="152.9" width="6.5" height="6.5" fill="#c1272d"/>
<rect x="916.5" y="175.1" width="6.5" height="6.5" fill="#c1272d"/>
<rect x="916.5" y="197.2" width="6.5" height="6.5" fill="#c1272d"/>
<g stroke="#b06a5a" fill="none" stroke-width="1.2"><circle cx="897.2" cy="177.5" r="3.6"/><path d="M890.2,177.5 H904.2 M897.2,170.5 V184.5"/></g>
<path d="M800.5,212.5 L830.5,412" stroke="#2d6e30" stroke-width="1" fill="none"/>
<circle cx="803.0" cy="229.0" r="1.3" fill="#2ea836"/>
<circle cx="806.0" cy="250.0" r="1.3" fill="#2ea836"/>
<circle cx="809.5" cy="272.0" r="1.3" fill="#2ea836"/>
<circle cx="813.0" cy="295.0" r="1.3" fill="#2ea836"/>
<circle cx="817.0" cy="320.0" r="1.3" fill="#2ea836"/>
<circle cx="820.5" cy="345.0" r="1.3" fill="#2ea836"/>
<circle cx="824.0" cy="369.0" r="1.3" fill="#2ea836"/>
<circle cx="827.0" cy="390.0" r="1.3" fill="#2ea836"/>
<rect x="797" y="209" width="7" height="7" fill="none" stroke="#2ea836" stroke-width="1.4"/>
<rect x="830.8" y="414.3" width="44.4" height="45" fill="none" stroke="#e3c54a" stroke-width="1.2"/>
<path d="M809.1,392.8 H853.3 V437.2 H809.1Z" stroke="#7ab894" stroke-width="0.8" fill="none"/>
<rect x="805.1" y="388.8" width="8" height="8" fill="#2ea836"/>
<rect x="805.1" y="411.3" width="8" height="8" fill="#2ea836"/>
<rect x="805.1" y="433.2" width="8" height="8" fill="#2ea836"/>
<rect x="826.8" y="388.8" width="8" height="8" fill="#2ea836"/>
<rect x="826.8" y="433.2" width="8" height="8" fill="#2ea836"/>
<rect x="849.3" y="388.8" width="8" height="8" fill="#2ea836"/>
<rect x="849.3" y="411.3" width="8" height="8" fill="#2ea836"/>
<rect x="849.3" y="433.2" width="8" height="8" fill="#2ea836"/>
<g stroke="#8fc49a" fill="none" stroke-width="1.2"><circle cx="830.5" cy="412.5" r="3.6"/><path d="M823.5,412.5 H837.5 M830.5,405.5 V419.5"/></g>
<path d="M131.5,369.5 L355,370.5" stroke="#4e483e" stroke-width="1" fill="none"/><path d="M355,370.5 L578.5,371.5" stroke="#756d62" stroke-width="1" fill="none"/>
<circle cx="141.0" cy="369.5" r="0.9" fill="#a8a08c"/>
<circle cx="155.0" cy="369.6" r="0.9" fill="#a8a08c"/>
<circle cx="169.0" cy="369.7" r="0.9" fill="#a8a08c"/>
<circle cx="189.0" cy="369.8" r="0.9" fill="#a8a08c"/>
<circle cx="217.0" cy="369.9" r="0.9" fill="#a8a08c"/>
<circle cx="259.0" cy="370.1" r="0.9" fill="#a8a08c"/>
<circle cx="318.0" cy="370.4" r="0.9" fill="#a8a08c"/>
<circle cx="451.0" cy="371.0" r="1" fill="#8a7a66"/>
<circle cx="492.0" cy="371.2" r="1" fill="#8a7a66"/>
<circle cx="520.0" cy="371.3" r="1" fill="#8a7a66"/>
<circle cx="540.0" cy="371.4" r="1" fill="#8a7a66"/>
<circle cx="555.0" cy="371.4" r="1" fill="#8a7a66"/>
<circle cx="565.0" cy="371.5" r="1" fill="#8a7a66"/>
<g stroke="#b4b4b4" fill="none" stroke-width="1.2"><circle cx="131.5" cy="369.5" r="3.6"/><path d="M124.5,369.5 H138.5 M131.5,362.5 V376.5"/></g>
<rect x="575" y="368" width="7" height="7" fill="#fff" stroke="#7a6f5f" stroke-width="1.4"/><rect x="578" y="371" width="3" height="3" fill="#7a6f5f"/>
<path d="M600,336.5 L783,290" stroke="#6a6258" stroke-width="1" fill="none"/>
<circle cx="612.0" cy="333.5" r="1" fill="#8a7a66"/>
<circle cx="624.0" cy="330.5" r="1" fill="#8a7a66"/>
<circle cx="640.0" cy="326.5" r="1" fill="#8a7a66"/>
<circle cx="662.0" cy="321.0" r="1" fill="#8a7a66"/>
<circle cx="690.0" cy="314.0" r="1" fill="#8a7a66"/>
<circle cx="722.0" cy="305.5" r="1" fill="#8a7a66"/>
<circle cx="750.0" cy="298.5" r="1" fill="#8a7a66"/>
<circle cx="768.0" cy="294.0" r="1" fill="#8a7a66"/>
<rect x="596.5" y="333" width="7" height="7" fill="#fff" stroke="#7a6f5f" stroke-width="1.4"/><rect x="599.5" y="336" width="3" height="3" fill="#7a6f5f"/>
<g stroke="#a9a9a9" stroke-width="1.3" fill="none"><path d="M776,290 h14 M783,283 v14 M778,285 l10,10 M788,285 l-10,10"/><circle cx="783" cy="290" r="3.5" fill="#c9c9c9"/></g>
</g>
</svg>
<!--UI-->
<div id="vbar">
 <div class="dd" style="left:-4px;top:8px;width:20px;height:15px;"></div>
 <svg class="abs" style="left:4px;top:12px" width="10" height="7" viewBox="0 0 10 7"><path d="M1.8,1.8 L5,4.8 L8.2,1.8" stroke="#c4c4c4" stroke-width="1.15" fill="none"/></svg>
 <div class="dd" style="left:27px;top:8px;width:78px;height:15px;"></div>
 <div class="t" style="left:32px;top:9px;font-size:11.6px;line-height:14px;color:#c6c6c6;transform:scaleX(0.848);">(Full)</div>
 <svg class="abs" style="left:92px;top:12px" width="10" height="7" viewBox="0 0 10 7"><path d="M1.8,1.8 L5,4.8 L8.2,1.8" stroke="#c4c4c4" stroke-width="1.15" fill="none"/></svg>
 <div class="abs" style="left:112px;top:8px;width:1px;height:15px;background:#303030"></div>
 <svg class="abs" style="left:112px;top:4px" width="230" height="24" viewBox="112 666 230 24">
  <!-- fast preview -->
  <rect x="118.5" y="672.8" width="11.5" height="9.4" fill="none" stroke="#c2c2c2" stroke-width="1.3"/>
  <path d="M125.5,673.5 L121.8,678.2 L124,678.2 L122.6,681.6 L126.6,676.6 L124.3,676.6Z" fill="#c2c2c2"/>
  <path d="M127,682 h4 l-2,2.2z" fill="#c2c2c2" stroke="#222" stroke-width="0.5"/>
  <!-- transparency grid -->
  <rect x="135" y="669.5" width="18" height="16.5" fill="#151515"/>
  <rect x="137.8" y="673" width="12.6" height="9.4" fill="#15293a" stroke="#2d8ceb" stroke-width="1.2"/>
  <path d="M139,674.2 h3.4 v2.4 h-3.4z M145.8,674.2 h3.4 v2.4 h-3.4z M142.4,676.6 h3.4 v2.4 h-3.4z M139,679 h3.4 v2.4 h-3.4z M145.8,679 h3.4 v2.4 h-3.4z" fill="#2d8ceb"/>
  <!-- mask -->
  <rect x="154.5" y="669.5" width="18" height="16.5" fill="#151515"/>
  <path d="M158.5,682 L160.5,676 L163.8,672.8 L169.6,673.6 L169.6,682Z" fill="none" stroke="#2d8ceb" stroke-width="1.3"/>
  <g fill="#2d8ceb"><rect x="157.3" y="680.8" width="2.4" height="2.4"/><rect x="162.6" y="671.6" width="2.4" height="2.4"/><rect x="168.4" y="672.4" width="2.4" height="2.4"/><rect x="168.4" y="680.8" width="2.4" height="2.4"/><rect x="159.3" y="674.8" width="2.4" height="2.4"/></g>
  <!-- ROI -->
  <rect x="177.6" y="673" width="11.4" height="9.2" fill="none" stroke="#c2c2c2" stroke-width="1.3"/>
  <rect x="180.3" y="675.6" width="6" height="4" fill="#c2c2c2"/>
  <!-- grid guides -->
  <rect x="197.5" y="672.6" width="10.4" height="8.2" fill="none" stroke="#c2c2c2" stroke-width="1.2"/>
  <path d="M202.7,671 v11.4 M195.8,676.7 h13.8" stroke="#c2c2c2" stroke-width="1.1" stroke-dasharray="2.2 1.2"/>
  <path d="M204.4,683.4 h4 l-2,2.2z" fill="#c2c2c2"/>
  <path d="M217.5,670 v15" stroke="#303030" stroke-width="1"/>
  <!-- rgb -->
  <circle cx="231.2" cy="675.2" r="2.9" fill="#f0272d"/><circle cx="228.6" cy="679.6" r="2.9" fill="#27c233"/><circle cx="233.6" cy="679.6" r="2.9" fill="#2f7df0"/>
  <path d="M232.7,683.6 h4 l-2,2.2z" fill="#c2c2c2"/>
  <!-- aperture -->
  <circle cx="251" cy="677.6" r="4.4" fill="none" stroke="#c2c2c2" stroke-width="2"/>
  <g stroke="#222" stroke-width="1"><path d="M251,672 l2,4 M256,675.5 l-4.2,1.2 M255.2,681.6 l-3.2,-2.8 M249.6,683.2 l0.8,-4.2 M245.6,679.4 l4.2,-1.2 M247,673.6 l3.2,2.8"/></g>
  <path d="M296.5,670 v15" stroke="#303030" stroke-width="1"/>
  <!-- camera -->
  <path d="M304,675 h2.6 l1.2,-1.8 h4.4 l1.2,1.8 h2.6 v7.4 h-12z" fill="#c2c2c2"/>
  <circle cx="310" cy="678.6" r="2.1" fill="#222"/>
  <!-- dim icon -->
  <g stroke="#4a443c" stroke-width="1.6" fill="none"><circle cx="328" cy="679.6" r="3"/><circle cx="332.4" cy="675.2" r="3"/><path d="M324,683 l11,-11"/></g>
 </svg>
 <div class="t" style="left:263px;top:9.5px;font-size:11.6px;line-height:14px;color:#2d8ceb;transform:scaleX(0.773);">+0,0</div>
 <div class="abs" style="left:343px;top:8px;width:1px;height:15px;background:#303030"></div>
 <div class="dd" style="left:349px;top:9px;width:61.5px;height:14px;background:#1a1a1a"></div>
 <div class="t" style="left:356px;top:10px;font-size:10.6px;line-height:13px;color:#bdbdbd;transform:scaleX(0.919);">0:00:03:04</div>
 <div class="abs" style="left:416px;top:8px;width:1px;height:15px;background:#303030"></div>
</div>
<div id="blueline"></div>
<div id="tabs">
 <div class="t" style="left:0;top:5px;font-size:10.3px;line-height:14px;color:#a4a4a4;transform:scaleX(0.872);">ue</div>
 <div class="sw" style="left:59.5px;top:6.5px;background:#b89a6a;"></div>
 <div class="t" style="left:78px;top:5px;font-size:10.3px;line-height:14px;color:#a4a4a4;transform:scaleX(0.91);">CEQA1_scene_47_DIV</div>
 <div class="sw" style="left:225px;top:6.5px;background:#22a33a;"></div>
 <div class="t" style="left:243.5px;top:5px;font-size:10.3px;line-height:14px;color:#a4a4a4;transform:scaleX(0.968);">Main_Comp</div>
 <div class="t" style="left:331.5px;top:5px;font-size:10.5px;line-height:14px;color:#8c8c8c;">×</div>
 <div class="sw" style="left:346.5px;top:6.5px;background:#22a33a;"></div>
 <div class="t" style="left:365px;top:5px;font-size:10.3px;line-height:14px;color:#dcdcdc;transform:scaleX(0.913);">CEQA1_scene_48_DIV</div>
 <svg class="abs" style="left:473px;top:8px" width="8" height="8" viewBox="0 0 8 8"><path d="M0.5,1 h6.5 M0.5,4 h6.5 M0.5,7 h6.5" stroke="#bdbdbd" stroke-width="1"/></svg>
 <div class="abs" style="left:333px;top:20.3px;width:147px;height:1.6px;background:#c8c8c8;"></div>
</div>
<div id="tl">
 <div class="abs" style="left:0;top:6.5px;width:406px;height:16px;background:#121212;border-radius:2px;"></div>
 <svg class="abs" style="left:418px;top:4px" width="134" height="22" viewBox="418 721 134 22">
  <!-- flowchart -->
  <g fill="#c2c2c2"><rect x="423" y="725.6" width="4.2" height="3"/><rect x="430.4" y="727.6" width="4.6" height="3.2"/><rect x="430.4" y="732.4" width="4.6" height="3.2"/><path d="M427,726.6 h2 v8 h1.6 M429,729.2 h1.6" stroke="#c2c2c2" stroke-width="0.9" fill="none"/><path d="M433,737 h3.6 l-1.8,2z"/></g>
  <!-- blue shy -->
  <rect x="451.5" y="731" width="14.5" height="6.6" fill="#1d4f7c"/>
  <path d="M452.5,731 a6.3,5.6 0 0 1 12.6,0z" fill="#2d8ceb"/><path d="M458.8,724.6 v11 M453,735.6 h11.6 M455.4,731 v3 M462.2,731 v3" stroke="#2d8ceb" stroke-width="1.3" fill="none"/>
  <!-- frame blending -->
  <g><rect x="476" y="728" width="8.6" height="10" fill="none" stroke="#9a9a9a" stroke-width="1.2"/><rect x="478.8" y="725.2" width="9.4" height="10.6" fill="#c2c2c2"/><path d="M480.6,725.2 v10.6 M486.4,725.2 v10.6 M478.8,728.6 h1.8 M478.8,732 h1.8 M486.4,728.6 h1.8 M486.4,732 h1.8" stroke="#232323" stroke-width="0.9"/></g>
  <!-- motion blur -->
  <g fill="none" stroke="#bdbdbd" stroke-width="1.2"><circle cx="502.8" cy="733.2" r="4.4"/><circle cx="505" cy="731.6" r="4.4"/></g><circle cx="507.6" cy="729.8" r="4.6" fill="#bdbdbd"/>
  <!-- graph editor -->
  <rect x="530.6" y="726.4" width="11.6" height="10.8" fill="none" stroke="#c2c2c2" stroke-width="1.3"/><path d="M531,728.4 q6.4,0 10.8,8" stroke="#c2c2c2" stroke-width="1.2" fill="none"/><path d="M533.4,724.4 v2 M539.4,724.4 v2" stroke="#c2c2c2" stroke-width="1.3"/>
 </svg>
 <!-- column header -->
 <div class="abs" style="left:168.5px;top:35px;width:1px;height:10px;background:#0c0c0c"></div>
 <svg class="abs" style="left:170px;top:33px" width="112" height="15" viewBox="170 750 112 15">
  <g stroke="#c6c6c6" fill="none" stroke-width="1.2">
   <path d="M173.6,757.8 a4.6,4.4 0 0 1 9.2,0z" fill="#c6c6c6" stroke="none"/><path d="M178.2,753 v7.4 M173.2,761 h10 M175.6,758 v2 M180.8,758 v2"/>
   <circle cx="191.4" cy="757.6" r="1.9" fill="#c6c6c6"/><path d="M191.4,753 v9.2 M186.8,757.6 h9.2 M188.2,754.4 l6.4,6.4 M194.6,754.4 l-6.4,6.4" stroke-width="0.9"/>
   <path d="M200,753 l8.6,8.6" stroke-dasharray="1.6 0.9" stroke-width="1.5"/>
   <rect x="227.6" y="753.6" width="7.6" height="7.4" fill="#c6c6c6"/><path d="M226,755.4 v7.2 h7.4" stroke-width="1"/><path d="M229.2,753.6 v7.4 M233.6,753.6 v7.4" stroke="#232323" stroke-width="0.7"/>
   <circle cx="243.6" cy="759" r="3"/><circle cx="245" cy="757.8" r="3"/><circle cx="246.8" cy="756.2" r="3.3" fill="#c6c6c6"/>
   <circle cx="258.6" cy="757.6" r="3.9"/><path d="M255.8,760.4 a3.9,3.9 0 0 0 5.6,-5.6z" fill="#c6c6c6" stroke="none"/>
   <path d="M272,753.6 l3.6,1.8 v4.2 l-3.6,2 l-3.6,-2 v-4.2z M268.4,755.4 l3.6,1.8 l3.6,-1.8 M272,757.2 v4.4" stroke-width="1"/>
  </g>
 </svg>
 <div class="t" style="left:212.5px;top:33.5px;font-size:12.5px;line-height:14px;font-style:italic;color:#c6c6c6;letter-spacing:-0.6px;">fx</div>
 <div class="abs" style="left:288.5px;top:35px;width:1px;height:10px;background:#0c0c0c"></div>
 <div class="t" style="left:296px;top:35px;font-size:9px;color:#8c8c8c;transform:scaleX(0.888);">Mode</div>
 <div class="t" style="left:341.5px;top:35px;font-size:9px;color:#8c8c8c;transform:scaleX(0.9);">T</div>
 <div class="t" style="left:357px;top:35px;font-size:9px;color:#8c8c8c;transform:scaleX(0.877);">Track Matte</div>
 <svg class="abs" style="left:412px;top:34px" width="26" height="13" viewBox="412 751 26 13"><rect x="413.5" y="752.5" width="8.4" height="8.6" fill="#c6c6c6"/><circle cx="417.7" cy="756.8" r="2.5" fill="#232323"/><rect x="426.8" y="752.5" width="8.4" height="8.6" fill="#c6c6c6"/><path d="M428,760 q0.6,-5.4 6,-6.4 q-0.6,5.4 -6,6.4z" fill="#232323"/></svg>
 <div class="abs" style="left:438px;top:35px;width:1px;height:10px;background:#0c0c0c"></div>
 <div class="t" style="left:443.5px;top:35px;font-size:9px;color:#8c8c8c;transform:scaleX(0.907);">Parent &amp; Link</div>
 <div class="abs" style="left:543.5px;top:35px;width:1px;height:10px;background:#0c0c0c"></div>
 <!-- layer row -->
 <div class="abs" style="left:0;top:49px;width:557px;height:14px;background:#3a3a3a;"></div>
 <div class="abs" style="left:0;top:49px;width:167.6px;height:14px;background:#a2a2a2;"></div>
 <div class="abs" style="left:186px;top:49px;width:13px;height:14px;background:#303030;"></div>
 <div class="abs" style="left:240px;top:49px;width:12px;height:14px;background:#303030;"></div>
 <div class="abs" style="left:253px;top:49px;width:12px;height:14px;background:#303030;"></div>
 <div class="abs" style="left:266px;top:49px;width:12px;height:14px;background:#303030;"></div>
 <svg class="abs" style="left:170px;top:49px" width="45" height="14" viewBox="170 766 45 14"><g stroke="#d0d0d0" fill="none" stroke-width="1.2"><path d="M173.6,773.2 a4.6,4.4 0 0 1 9.2,0z" fill="#d0d0d0" stroke="none"/><path d="M178.2,768.4 v7.4 M173.2,776.4 h10 M175.6,773.4 v2 M180.8,773.4 v2"/><path d="M200.6,777.6 l8.8,-9" stroke-width="1.4"/></g></svg>
 <div class="abs" style="left:283px;top:49px;width:10.5px;height:14px;background:#2a2a2a;"></div>
 <div class="abs" style="left:293.5px;top:49px;width:40.5px;height:14px;background:#1c1c1c;"></div>
 <div class="t" style="left:299.5px;top:50px;font-size:10px;line-height:13px;color:#d2d2d2;transform:scaleX(0.95);">Norn</div>
 <svg class="abs" style="left:322.5px;top:53.5px" width="9" height="6" viewBox="0 0 9 6"><path d="M1.5,1.2 L4.5,4 L7.5,1.2" stroke="#c4c4c4" stroke-width="1.1" fill="none"/></svg>
 <div class="abs" style="left:334px;top:49px;width:4px;height:14px;background:#2a2a2a;"></div>
 <div class="abs" style="left:338px;top:49px;width:12px;height:14px;background:#3c3c3c;"></div>
 <div class="abs" style="left:350px;top:49px;width:19px;height:14px;background:#2a2a2a;"></div>
 <svg class="abs" style="left:354px;top:50px" width="13" height="12" viewBox="0 0 13 12"><path d="M6.4,6.4 a1.2,1.2 0 1 1 1.2,-1.4 a2.6,2.6 0 1 1 -2.6,-1.8 a4.2,4.2 0 1 1 -2.4,6.6" stroke="#b4b4b4" stroke-width="1" fill="none"/><path d="M11,3 v4 M11,9 v1" stroke="#b4b4b4" stroke-width="1"/></svg>
 <div class="abs" style="left:368.5px;top:49px;width:40.5px;height:14px;background:#1c1c1c;"></div>
 <div class="t" style="left:374.5px;top:50px;font-size:10px;line-height:13px;color:#d2d2d2;width:22px;overflow:hidden;transform:scaleX(0.94);">No Matte</div>
 <svg class="abs" style="left:397px;top:53.5px" width="9" height="6" viewBox="0 0 9 6"><path d="M1.5,1.2 L4.5,4 L7.5,1.2" stroke="#c4c4c4" stroke-width="1.1" fill="none"/></svg>
 <div class="abs" style="left:409px;top:49px;width:33px;height:14px;background:#3c3c3c;"></div>
 <div class="abs" style="left:442px;top:49px;width:18px;height:14px;background:#2a2a2a;"></div>
 <svg class="abs" style="left:442.5px;top:50px" width="13" height="12" viewBox="0 0 13 12"><path d="M6.4,6.4 a1.2,1.2 0 1 1 1.2,-1.4 a2.6,2.6 0 1 1 -2.6,-1.8 a4.2,4.2 0 1 1 -2.4,6.6" stroke="#b4b4b4" stroke-width="1" fill="none"/></svg>
 <div class="abs" style="left:459.5px;top:49px;width:80.5px;height:14px;background:#1c1c1c;"></div>
 <div class="t" style="left:465.5px;top:50px;font-size:10px;line-height:13px;color:#d2d2d2;transform:scaleX(0.937);">None</div>
 <svg class="abs" style="left:526.5px;top:53.5px" width="9" height="6" viewBox="0 0 9 6"><path d="M1.5,1.2 L4.5,4 L7.5,1.2" stroke="#c4c4c4" stroke-width="1.1" fill="none"/></svg>
 <!-- next row -->
 <div class="abs" style="left:0;top:63px;width:557px;height:8px;background:#262626;"></div>
 <div class="t" style="left:177px;top:65.5px;font-size:9.6px;line-height:12px;color:#2d8ceb;transform:scaleX(0.986);">499,0,718,0</div>
 <svg class="abs" style="left:452px;top:64px" width="13" height="12" viewBox="0 0 13 12"><path d="M6.4,6.4 a1.2,1.2 0 1 1 1.2,-1.4 a2.6,2.6 0 1 1 -2.6,-1.8 a4.2,4.2 0 1 1 -2.4,6.6" stroke="#9a9a9a" stroke-width="1" fill="none"/></svg>
 <div class="abs" style="left:557px;top:22px;width:1px;height:49px;background:#111;"></div>
<div class="abs" style="left:558px;top:0;width:842px;height:71px;overflow:hidden;">
<div class="abs" style="left:2.0px;top:4.0px;width:840.0px;height:9.5px;background:#2f301f;"></div>
<div class="abs" style="left:5.0px;top:4.5px;width:42.0px;height:8.5px;background:#6e6e6e;"></div>
<div class="abs" style="left:1.0px;top:4.0px;width:5.5px;height:9.5px;background:#2d8ceb;border-radius:5px 0 0 5px;"></div>
<div class="abs" style="left:46.0px;top:4.0px;width:5.5px;height:9.5px;background:#2d8ceb;border-radius:0 5px 5px 0;"></div>
<div class="abs" style="left:23.0px;top:5.5px;width:1.0px;height:6.5px;background:#2d8ceb;"></div>
<div class="abs" style="left:6.8px;top:25.5px;width:1.0px;height:4.0px;background:#8a8a8a;"></div>
<div class="t" style="left:-7.6px;top:13.5px;width:28px;text-align:center;font-size:10px;line-height:12px;color:#b2b2b2;transform-origin:50% 50%;transform:scaleX(0.93);">0:00f</div>
<div class="abs" style="left:83.1px;top:25.5px;width:1.0px;height:4.0px;background:#8a8a8a;"></div>
<div class="t" style="left:68.7px;top:13.5px;width:28px;text-align:center;font-size:10px;line-height:12px;color:#b2b2b2;transform-origin:50% 50%;transform:scaleX(0.93);">00:12f</div>
<div class="abs" style="left:159.3px;top:25.5px;width:1.0px;height:4.0px;background:#8a8a8a;"></div>
<div class="t" style="left:144.9px;top:13.5px;width:28px;text-align:center;font-size:10px;line-height:12px;color:#b2b2b2;transform-origin:50% 50%;transform:scaleX(0.93);">01:00f</div>
<div class="abs" style="left:235.6px;top:25.5px;width:1.0px;height:4.0px;background:#8a8a8a;"></div>
<div class="t" style="left:221.2px;top:13.5px;width:28px;text-align:center;font-size:10px;line-height:12px;color:#b2b2b2;transform-origin:50% 50%;transform:scaleX(0.93);">01:12f</div>
<div class="abs" style="left:311.9px;top:25.5px;width:1.0px;height:4.0px;background:#8a8a8a;"></div>
<div class="t" style="left:297.5px;top:13.5px;width:28px;text-align:center;font-size:10px;line-height:12px;color:#b2b2b2;transform-origin:50% 50%;transform:scaleX(0.93);">02:00f</div>
<div class="abs" style="left:388.1px;top:25.5px;width:1.0px;height:4.0px;background:#8a8a8a;"></div>
<div class="t" style="left:373.7px;top:13.5px;width:28px;text-align:center;font-size:10px;line-height:12px;color:#b2b2b2;transform-origin:50% 50%;transform:scaleX(0.93);">02:12f</div>
<div class="abs" style="left:464.4px;top:25.5px;width:1.0px;height:4.0px;background:#8a8a8a;"></div>
<div class="t" style="left:450.0px;top:13.5px;width:28px;text-align:center;font-size:10px;line-height:12px;color:#b2b2b2;transform-origin:50% 50%;transform:scaleX(0.93);">03:00f</div>
<div class="abs" style="left:540.7px;top:25.5px;width:1.0px;height:4.0px;background:#8a8a8a;"></div>
<div class="t" style="left:526.3px;top:13.5px;width:28px;text-align:center;font-size:10px;line-height:12px;color:#b2b2b2;transform-origin:50% 50%;transform:scaleX(0.93);">03:12f</div>
<div class="abs" style="left:617.0px;top:25.5px;width:1.0px;height:4.0px;background:#8a8a8a;"></div>
<div class="t" style="left:602.6px;top:13.5px;width:28px;text-align:center;font-size:10px;line-height:12px;color:#b2b2b2;transform-origin:50% 50%;transform:scaleX(0.93);">04:00f</div>
<div class="abs" style="left:693.2px;top:25.5px;width:1.0px;height:4.0px;background:#8a8a8a;"></div>
<div class="t" style="left:678.8px;top:13.5px;width:28px;text-align:center;font-size:10px;line-height:12px;color:#b2b2b2;transform-origin:50% 50%;transform:scaleX(0.93);">04:12f</div>
<div class="abs" style="left:769.5px;top:25.5px;width:1.0px;height:4.0px;background:#8a8a8a;"></div>
<div class="t" style="left:755.1px;top:13.5px;width:28px;text-align:center;font-size:10px;line-height:12px;color:#b2b2b2;transform-origin:50% 50%;transform:scaleX(0.93);">05:00f</div>
<div class="abs" style="left:845.8px;top:25.5px;width:1.0px;height:4.0px;background:#8a8a8a;"></div>
<div class="t" style="left:831.4px;top:13.5px;width:28px;text-align:center;font-size:10px;line-height:12px;color:#b2b2b2;transform-origin:50% 50%;transform:scaleX(0.93);">05:12f</div>
<div class="abs" style="left:0.0px;top:30.0px;width:842.0px;height:1.0px;background:#101010;"></div>
<div class="abs" style="left:1.0px;top:31.0px;width:841.0px;height:13.0px;background:#555555;"></div>
<div class="abs" style="left:1.0px;top:31.0px;width:4.5px;height:13.0px;background:#2d8ceb;border-radius:4px 0 0 4px;"></div>
<div class="abs" style="left:0.0px;top:44.0px;width:842.0px;height:5.0px;background:#1d1d1d;"></div>
<div class="abs" style="left:76.0px;top:45.7px;width:766.0px;height:3.0px;background:#20c02c;"></div>
<div class="abs" style="left:0.0px;top:49.0px;width:842.0px;height:14.0px;background:#474747;"></div>
<div class="abs" style="left:491.0px;top:50.0px;width:351.0px;height:13.0px;background:#a3916f;"></div>
<div class="abs" style="left:0.0px;top:63.0px;width:842.0px;height:8.0px;background:#2a2a2a;"></div>
<div class="abs" style="left:490.0px;top:29.0px;width:1.0px;height:42.0px;background:#2d8ceb;"></div>
<svg class="abs" style="left:484.5px;top:18.5px" width="12" height="12" viewBox="0 0 12 12"><path d="M1,0.5 H11 V6 L6,11 L1,6Z" fill="#2d8ceb"/><path d="M6,3 V11" stroke="#14508c" stroke-width="1"/></svg>
<svg class="abs" style="left:485.5px;top:66.5px" width="150" height="6" viewBox="0 0 150 6"><path d="M0,0 h9 l-4.5,5z M135,0 h9 l-4.5,5z" fill="#b8b8b8"/></svg>
</div>
</div>
</body>
</html>
